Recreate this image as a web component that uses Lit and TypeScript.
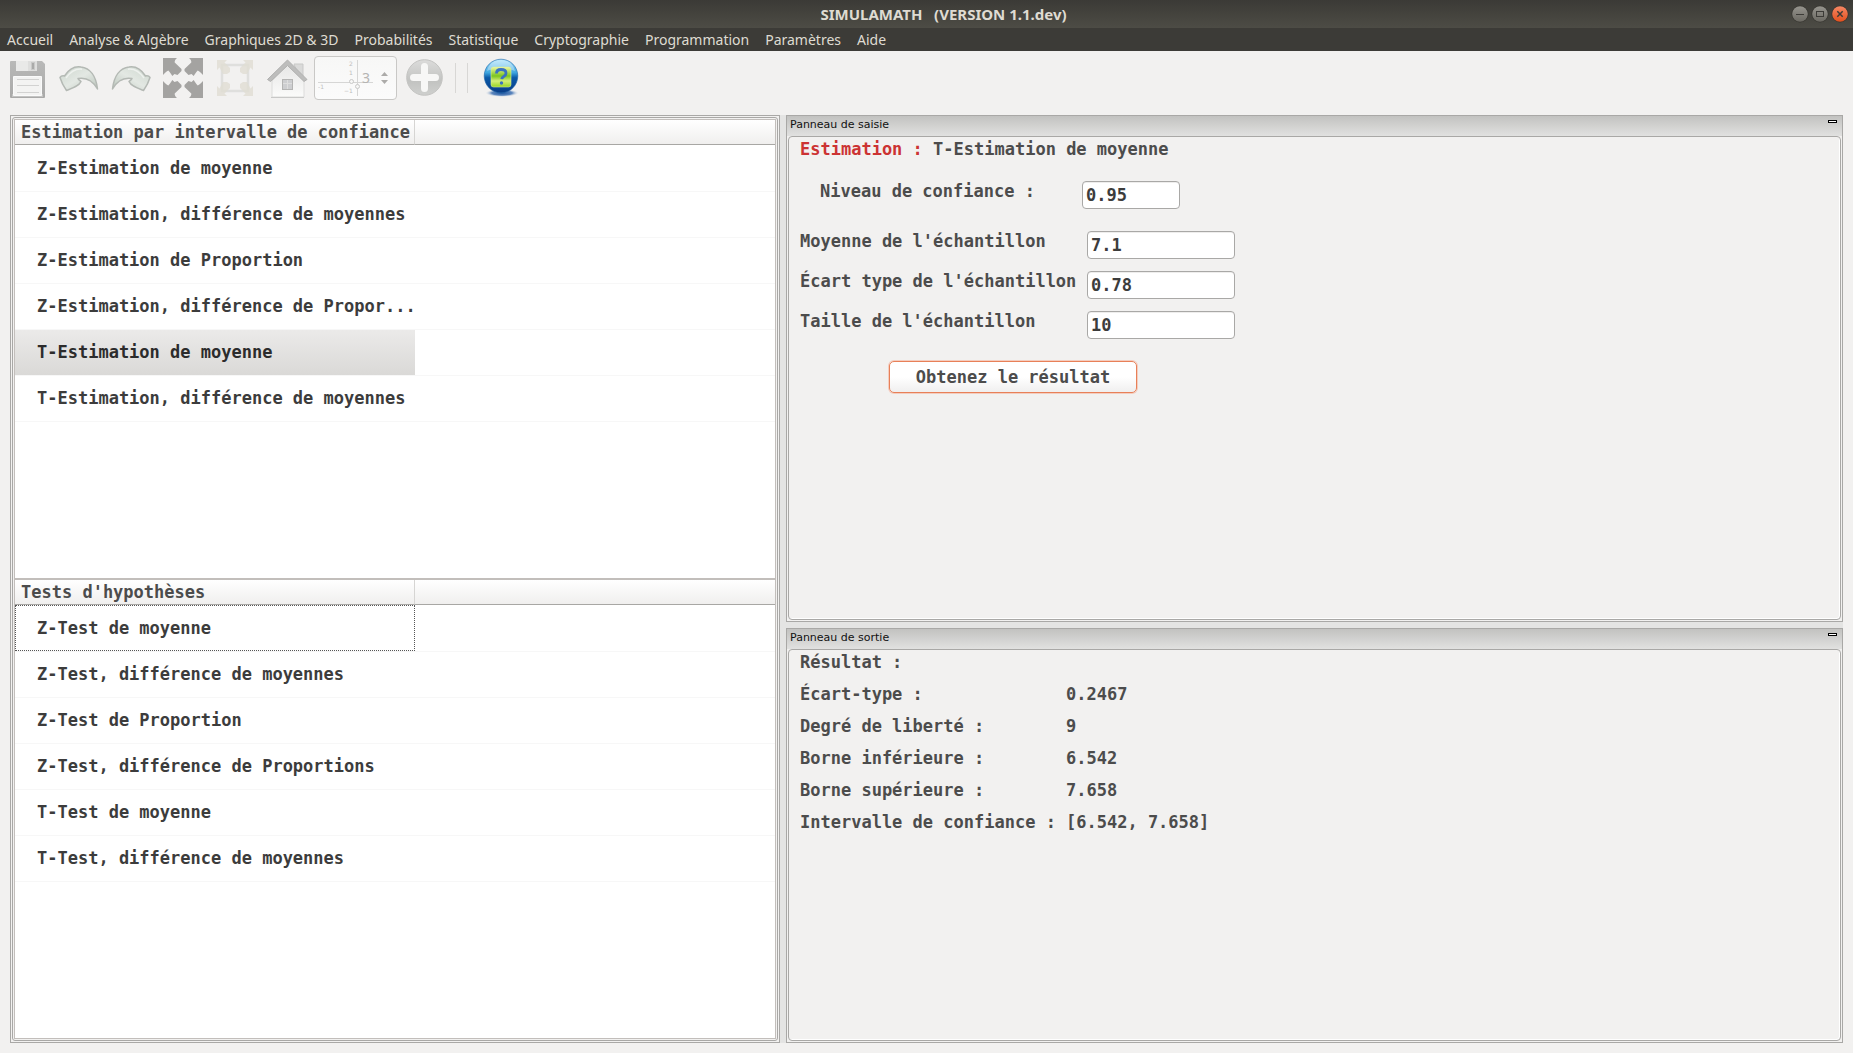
import { LitElement, html, css, svg } from "lit";
import { customElement, property, state } from "lit/decorators.js";
import { classMap } from "lit/directives/class-map.js";

const MENUS = [
  "Accueil",
  "Analyse & Algèbre",
  "Graphiques 2D & 3D",
  "Probabilités",
  "Statistique",
  "Cryptographie",
  "Programmation",
  "Paramètres",
  "Aide",
];

const ESTIMATIONS = [
  "Z-Estimation de moyenne",
  "Z-Estimation, différence de moyennes",
  "Z-Estimation de Proportion",
  "Z-Estimation, différence de Propor...",
  "T-Estimation de moyenne",
  "T-Estimation, différence de moyennes",
];

const TESTS = [
  "Z-Test de moyenne",
  "Z-Test, différence de moyennes",
  "Z-Test de Proportion",
  "Z-Test, différence de Proportions",
  "T-Test de moyenne",
  "T-Test, différence de moyennes",
];

const FIELDS = [
  { id: "mean", label: "Moyenne de l'échantillon", value: "7.1" },
  { id: "deviation", label: "Écart type de l'échantillon", value: "0.78" },
  { id: "size", label: "Taille de l'échantillon", value: "10" },
];

const RESULTS = [
  ["Écart-type :", "0.2467"],
  ["Degré de liberté :", "9"],
  ["Borne inférieure :", "6.542"],
  ["Borne supérieure :", "7.658"],
  ["Intervalle de confiance :", "[6.542, 7.658]"],
];

const reset = css`
  *,
  *::before,
  *::after {
    box-sizing: border-box;
  }
  button,
  input {
    margin: 0;
    padding: 0;
    border: 0;
    background: none;
    font: inherit;
    color: inherit;
    outline: none;
  }
`;

@customElement("title-bar")
class TitleBar extends LitElement {
  static styles = [
    reset,
    css`
      :host {
        display: grid;
        grid-template-columns: 1fr auto 1fr;
        align-items: center;
        height: 28px;
        padding-right: 4px;
        background: linear-gradient(#3b3a36, #4d4c45);
        color: #dfdbd2;
        font: bold 15px/28px "Noto Sans", sans-serif;
      }
      .title {
        grid-column: 2;
        margin: 0;
        padding-left: 38px;
        font: inherit;
        white-space: pre;
      }
      .buttons {
        display: flex;
        justify-content: flex-end;
        gap: 2px;
      }
      button {
        display: flex;
        width: 18px;
        height: 18px;
      }
    `,
  ];

  render() {
    return html`
      <h1 class="title">SIMULAMATH   (VERSION 1.1.dev)</h1>
      <div class="buttons">
        <button aria-label="Réduire">
          <svg width="18" height="18" viewBox="0 0 18 18">
            <defs>
              <linearGradient id="g" x2="0" y2="1">
                <stop offset="0" stop-color="#96948e" />
                <stop offset="1" stop-color="#6b6962" />
              </linearGradient>
            </defs>
            <circle cx="9" cy="9" r="8.5" fill="#35342f" />
            <circle cx="9" cy="9" r="7.8" fill="url(#g)" />
            <path d="M5 9.5h8" stroke="#3c3b37" />
          </svg>
        </button>
        <button aria-label="Agrandir">
          <svg width="18" height="18" viewBox="0 0 18 18">
            <circle cx="9" cy="9" r="8.5" fill="#35342f" />
            <circle cx="9" cy="9" r="7.8" fill="url(#g)" />
            <rect x="5.5" y="6.5" width="7" height="5" fill="none" stroke="#3c3b37" />
          </svg>
        </button>
        <button aria-label="Fermer">
          <svg width="18" height="18" viewBox="0 0 18 18">
            <defs>
              <linearGradient id="r" x2="0" y2="1">
                <stop offset="0" stop-color="#f58764" />
                <stop offset="1" stop-color="#e2501e" />
              </linearGradient>
            </defs>
            <circle cx="9" cy="9" r="8.5" fill="#35342f" />
            <circle cx="9" cy="9" r="7.8" fill="url(#r)" />
            <path d="M6.3 6.3l5.4 5.4M11.7 6.3l-5.4 5.4" stroke="#3c3b37" stroke-width="1.5" />
          </svg>
        </button>
      </div>
    `;
  }
}

@customElement("menu-bar")
class MenuBar extends LitElement {
  static styles = [
    reset,
    css`
      :host {
        display: block;
        background: #3c3b37;
        color: #dfdbd2;
        font: 14px/23px "Noto Sans", sans-serif;
      }
      nav {
        display: flex;
        gap: 16px;
        height: 23px;
        padding-left: 7px;
      }
      a {
        color: inherit;
        text-decoration: none;
        white-space: nowrap;
      }
    `,
  ];

  render() {
    return html`<nav>${MENUS.map((m) => html`<a href="#">${m}</a>`)}</nav>`;
  }
}

const saveIcon = svg`
  <defs>
    <linearGradient id="sv" x2="0" y2="1">
      <stop offset="0" stop-color="#b9b9b8" /><stop offset="1" stop-color="#a9a9a8" />
    </linearGradient>
  </defs>
  <g transform="translate(2 0)">
    <path d="M3 4h31l3 3v33a1 1 0 0 1-1 1H3a1 1 0 0 1-1-1V5a1 1 0 0 1 1-1z" fill="url(#sv)" />
    <path d="M4 37h31v3H4z" fill="#c3c3c2" />
    <path d="M8 4h21v10H8z" fill="#dededd" />
    <path d="M8 4h12v10H8z" fill="#e9e9e8" />
    <rect x="23.500" y="5.500" width="3" height="7" fill="#aaaaa9" stroke="#c9c9c8" />
    <path d="M5.500 19.500h28v19h-28z" fill="#f3f3f2" stroke="#fafafa" />
    <path d="M9 22.500h22M9 28.500h22M9 35.500h22" stroke="#d2d2d1" />
  </g>`;

const arrowShape = svg`
  <defs>
    <linearGradient id="ar" x2="1" y2="1">
      <stop offset="0" stop-color="#ccd6cd" /><stop offset=".5" stop-color="#e3e8e3" /><stop offset="1" stop-color="#b9c4ba" />
    </linearGradient>
  </defs>
  <path d="M2 19.500C3 18 4.500 17.500 6.500 18 11 11 17 8 23 9c9 1 15 9 16.500 22C35 23 29 19 20 20.500c.5 1.500 2 2 3 3C21 28 15 30 8.500 32.500 6 29 3.500 24.500 2 19.500z"
    fill="url(#ar)" stroke="#b4b9b4" stroke-width="1.500" stroke-linejoin="round" />
  <path d="M8 20C13 13 18 10.500 24 11.200" fill="none" stroke="#eef1ee" stroke-width="1.500" />`;

const undoIcon = svg`<g transform="translate(0 1)">${arrowShape}</g>`;
const redoIcon = svg`<g transform="matrix(-1 0 0 1 42 1)">${arrowShape}</g>`;

const cornerArrow = "M1 1h14c-1.500 1-2.500 3-2.300 4.500L19.500 12v2l-4 4-3-1-2.200 2c-1-1.500-2-3.500-4-5.500C4.500 14 3 16 1 18z";
const expandIcon = svg`
  <g fill="#a4a3a1">
    <path d=${cornerArrow} />
    <path d=${cornerArrow} transform="matrix(-1 0 0 1 42 0)" />
    <path d=${cornerArrow} transform="matrix(1 0 0 -1 0 42)" />
    <path d=${cornerArrow} transform="matrix(-1 0 0 -1 42 42)" />
  </g>`;

const fitCorner = "M3 3h10l-2.500 2.500L16 11v4l-3 2H9l-3.500-6.500L3 13z";
const fitIcon = svg`
  <rect x="8" y="8" width="26" height="26" fill="none" stroke="#dfdfdd" stroke-width="2.500" />
  <g fill="#e0ddd3" fill-opacity=".8">
    <path d=${fitCorner} />
    <path d=${fitCorner} transform="matrix(-1 0 0 1 42 0)" />
    <path d=${fitCorner} transform="matrix(1 0 0 -1 0 42)" />
    <path d=${fitCorner} transform="matrix(-1 0 0 -1 42 42)" />
  </g>`;

const homeIcon = svg`
  <defs>
    <linearGradient id="hw" x2="0" y2="1">
      <stop offset="0" stop-color="#e6e6e5" /><stop offset="1" stop-color="#fbfbfa" />
    </linearGradient>
  </defs>
  <path d="M28 7h9v16h-3z" fill="#dadad9" stroke="#c9c9c8" />
  <path d="M6 24L22 7l16 17v16H6z" fill="url(#hw)" stroke="#dcdcdb" />
  <path d="M5 40.500h33" stroke="#c8c8c7" />
  <path d="M1.500 22.500L21.500 3l19.500 19.500-3 2L21.500 8.500 4.500 24.500z" fill="#bdbdbc" stroke="#b1b1b0" stroke-linejoin="round" />
  <rect x="16.500" y="22.500" width="10" height="10" fill="#cdced0" stroke="#b4b4b3" />
  <path d="M21.500 23v9M17 26.500h9" stroke="#dedede" />`;

const plusIcon = svg`
  <defs>
    <linearGradient id="pl" x2="0" y2="1">
      <stop offset="0" stop-color="#dcdcdb" /><stop offset=".6" stop-color="#c2c3c1" /><stop offset="1" stop-color="#cfd0ce" />
    </linearGradient>
  </defs>
  <circle cx="21.500" cy="20.500" r="17.800" fill="url(#pl)" stroke="#c4c4c2" />
  <path d="M21.500 9.500v22M10.500 20.500h22" stroke="#f7f7f6" stroke-width="7" stroke-linecap="round" />`;

const helpIcon = svg`
  <defs>
    <linearGradient id="hb" x2="0" y2="1">
      <stop offset="0" stop-color="#a8e2fb" /><stop offset=".4" stop-color="#3da5df" />
      <stop offset=".55" stop-color="#0b5aa8" /><stop offset="1" stop-color="#0a3c86" />
    </linearGradient>
    <linearGradient id="hg" x2="0" y2="1">
      <stop offset="0" stop-color="#eef7a0" /><stop offset=".45" stop-color="#7cc51f" />
      <stop offset=".7" stop-color="#d5ee7a" /><stop offset="1" stop-color="#98d321" />
    </linearGradient>
    <radialGradient id="hs">
      <stop offset="0" stop-color="#1f56a0" /><stop offset=".6" stop-color="#5c86bd" /><stop offset="1" stop-color="#f2f1f0" stop-opacity="0" />
    </radialGradient>
  </defs>
  <ellipse cx="22" cy="36" rx="17" ry="4" fill="url(#hs)" />
  <circle cx="21" cy="19" r="16.800" fill="url(#hb)" stroke="#1c65a8" stroke-width=".6" />
  <path d="M7 14C9 6 15 3 21 3s12 3 14 11c-5-3-23-3-28 0z" fill="#fff" fill-opacity=".35" />
  <rect x="11" y="10" width="20" height="20" rx="2.500" fill="url(#hg)" stroke="#d9efa0" stroke-width=".6" />
  <path d="M16.500 16.500c0-3 2-4 4.500-4s5 1 5 3.700c0 3.300-4 3-4.300 6" fill="none" stroke="#3a72c0" stroke-width="2.800" />
  <circle cx="21.500" cy="26" r="1.700" fill="#3a72c0" />`;

@customElement("tool-bar")
class ToolBar extends LitElement {
  static styles = [
    reset,
    css`
      :host {
        display: flex;
        align-items: center;
        height: 54px;
        padding-left: 6px;
        gap: 6px;
      }
      .group {
        display: flex;
        gap: 10px;
      }
      .tool {
        display: flex;
        width: 42px;
        height: 42px;
      }
      .spin {
        display: flex;
        align-items: center;
        width: 83px;
        height: 44px;
        border: 1px solid #c9c8c6;
        border-radius: 4px;
        background: linear-gradient(#f7f7f6, #fbfbfb);
      }
      .spin svg {
        flex: none;
      }
      .level {
        display: flex;
        align-items: center;
        flex: 1;
        padding-left: 3px;
        color: #b5b4b2;
        font: 14px/20px "Noto Sans", sans-serif;
      }
      .level input {
        width: 12px;
        margin-left: -12px;
      }
      .arrows {
        display: flex;
        flex-direction: column;
        gap: 4px;
        padding-right: 8px;
      }
      .arrows button {
        display: flex;
      }
      .rules {
        display: flex;
        gap: 11px;
        margin: 0 6px 0 4px;
      }
      .rule {
        width: 1px;
        height: 30px;
        background: #d8d7d5;
      }
    `,
  ];

  private tool(label: string, icon: unknown) {
    return html`<button class="tool" aria-label=${label}>
      <svg width="42" height="42" viewBox="0 0 42 42">${icon}</svg>
    </button>`;
  }

  render() {
    return html`
      <div class="group">
        ${this.tool("Enregistrer", saveIcon)} ${this.tool("Annuler", undoIcon)}
        ${this.tool("Rétablir", redoIcon)} ${this.tool("Agrandir la vue", expandIcon)}
        ${this.tool("Ajuster la vue", fitIcon)} ${this.tool("Vue initiale", homeIcon)}
      </div>
      <div class="spin">
        <label class="level">
          <svg width="56" height="40" viewBox="0 0 56 40" aria-hidden="true">
            <path d="M0 24.500h55M39.500 2v36" stroke="#d6d6d5" />
            <g fill="#f7f7f6" stroke="#c9c9c8">
              <circle cx="33.500" cy="23.500" r="2" /><circle cx="39.500" cy="28.500" r="2" />
            </g>
            <g fill="#bebebd" font-family="DejaVu Sans" font-size="6">
              <text x="31" y="8">2</text><text x="31" y="17">1</text>
              <text x="0" y="31">-1</text><text x="26" y="35">−1</text>
            </g>
          </svg>
          <input type="text" inputmode="numeric" value="3" aria-label="Graduation" />
        </label>
        <div class="arrows">
          <button aria-label="Augmenter">
            <svg width="7" height="4" viewBox="0 0 7 4"><path d="M0 4l3.500-4L7 4z" fill="#acaba9" /></svg>
          </button>
          <button aria-label="Diminuer">
            <svg width="7" height="4" viewBox="0 0 7 4"><path d="M0 0l3.500 4L7 0z" fill="#acaba9" /></svg>
          </button>
        </div>
      </div>
      ${this.tool("Ajouter", plusIcon)}
      <div class="rules"><span class="rule"></span><span class="rule"></span></div>
      ${this.tool("Aide", helpIcon)}
    `;
  }
}

@customElement("method-table")
class MethodTable extends LitElement {
  @property() heading = "";
  @property({ attribute: false }) rows: string[] = [];
  @property({ type: Number }) selected = -1;
  @property({ type: Number }) current = -1;

  static styles = [
    reset,
    css`
      :host {
        display: block;
        flex: 1;
        min-height: 0;
        border: 1px solid #c2bebb;
        background: #fff;
        color: #3c3c3c;
        font: bold 17px/20px "DejaVu Sans Mono", monospace;
      }
      table {
        width: 100%;
        border-collapse: separate;
        border-spacing: 0;
        table-layout: fixed;
      }
      .name {
        width: 400px;
      }
      th {
        height: 25px;
        padding: 0 0 0 6px;
        border-bottom: 1px solid #a8a7a4;
        background: linear-gradient(#fff, #f0efee);
        color: #4c4c4c;
        text-align: left;
        white-space: nowrap;
      }
      th.name {
        border-right: 1px solid #d6d5d3;
      }
      td {
        height: 46px;
        padding: 0 0 1px 22px;
        border: 0 solid #f7f7f7;
        border-top-width: 1px;
        white-space: nowrap;
      }
      tr:first-child td {
        border-top-color: transparent;
      }
      tr:last-child td {
        height: 47px;
        border-bottom-width: 1px;
      }
      .selected .name {
        background: linear-gradient(#ebeae9, #dad9d7) padding-box;
        color: #2c2c2c;
      }
      .current .name {
        padding: 0 0 0 21px;
        border: 1px dotted #555;
      }
      tr.current:first-child .name {
        border-top-color: #555;
      }
    `,
  ];

  render() {
    return html`<table>
      <thead>
        <tr>
          <th class="name" scope="col">${this.heading}</th>
          <th></th>
        </tr>
      </thead>
      <tbody>
        ${this.rows.map(
          (row, i) => html`<tr
            class=${classMap({ selected: i === this.selected, current: i === this.current })}
            @click=${() => (this.selected = i)}
          >
            <td class="name">${row}</td>
            <td></td>
          </tr>`
        )}
      </tbody>
    </table>`;
  }
}

@customElement("dock-panel")
class DockPanel extends LitElement {
  @property() heading = "";

  static styles = [
    reset,
    css`
      :host {
        display: flex;
        flex-direction: column;
        min-height: 0;
        border: 1px solid #a9a8a6;
        background: #f2f1f0;
      }
      header {
        display: flex;
        justify-content: space-between;
        height: 20px;
        padding: 0 5px 0 3px;
        background: linear-gradient(#c2c2c0, #e1e1e0);
        color: #111;
      }
      h2 {
        margin: 0;
        font: 11px/17px "DejaVu Sans", sans-serif;
      }
      button {
        width: 9px;
        height: 3px;
        margin-top: 4px;
        border: 1px solid #000;
        background: #fff;
      }
      .body {
        flex: 1;
        margin: 0 1px 1px;
        padding: 2px 11px;
        border: 1px solid #a9a8a6;
        border-radius: 4px;
        box-shadow: inset -1px -1px #fff;
      }
    `,
  ];

  render() {
    return html`
      <header>
        <h2>${this.heading}</h2>
        <button aria-label="Réduire le panneau"></button>
      </header>
      <div class="body"><slot></slot></div>
    `;
  }
}

@customElement("app-root")
class AppRoot extends LitElement {
  @state() private method = "T-Estimation de moyenne";

  static styles = [
    reset,
    css`
      :host {
        display: flex;
        flex-direction: column;
        min-height: 100vh;
        background: #f2f1f0;
        color: #4c4c4c;
        font: bold 17px/20px "DejaVu Sans Mono", monospace;
      }
      main {
        display: flex;
        flex: 1;
        gap: 6px;
        margin: 10px;
        background: #e4e4e3;
      }
      .methods {
        display: flex;
        flex: 766 1 0;
        min-width: 0;
        padding: 1px;
        border: 1px solid #a9a8a6;
        background: #f2f1f0;
      }
      .tables {
        display: flex;
        flex: 1;
        flex-direction: column;
        min-width: 0;
        padding: 1px;
        border: 1px solid #a9a8a6;
        border-radius: 3px;
      }
      .panels {
        display: flex;
        flex: 1057 1 0;
        flex-direction: column;
        gap: 6px;
        min-width: 0;
      }
      .entry {
        flex: 507 1 0;
      }
      .output {
        flex: 415 1 0;
      }
      .subject {
        margin: 0;
        font: inherit;
      }
      .kind {
        color: #cc3333;
      }
      form {
        display: flex;
        flex-direction: column;
        align-items: flex-start;
      }
      .confidence {
        display: grid;
        grid-template-columns: 262px 98px;
        margin: 22px 0 22px 20px;
      }
      .fields {
        display: grid;
        grid-template-columns: 287px 148px;
        row-gap: 12px;
      }
      label {
        white-space: nowrap;
      }
      input {
        width: 100%;
        height: 28px;
        padding: 0 3px;
        border: 1px solid #a9a8a6;
        border-radius: 4px;
        background: #fff;
        box-shadow: inset 0 1px #eeedec;
        color: #3c3c3c;
      }
      .submit {
        width: 248px;
        height: 32px;
        margin: 22px 0 0 89px;
        border: 1px solid #e88058;
        border-radius: 5px;
        background: linear-gradient(#fff 50%, #f0efef);
        box-shadow: 0 0 0 1px #f4cdbf;
      }
      dl {
        display: grid;
        grid-template-columns: 266px auto;
        row-gap: 12px;
        margin: 12px 0 0;
      }
      dt,
      dd {
        margin: 0;
        white-space: nowrap;
      }
    `,
  ];

  render() {
    return html`
      <title-bar></title-bar>
      <menu-bar></menu-bar>
      <tool-bar></tool-bar>
      <main>
        <section class="methods">
          <div class="tables">
            <method-table
              heading="Estimation par intervalle de confiance"
              .rows=${ESTIMATIONS}
              .selected=${4}
            ></method-table>
            <method-table heading="Tests d'hypothèses" .rows=${TESTS} .current=${0}></method-table>
          </div>
        </section>
        <div class="panels">
          <dock-panel class="entry" heading="Panneau de saisie">
            <form @submit=${(e: Event) => e.preventDefault()}>
              <h3 class="subject"><span class="kind">Estimation :</span> ${this.method}</h3>
              <div class="confidence">
                <label for="confidence">Niveau de confiance :</label>
                <input id="confidence" type="text" value="0.95" />
              </div>
              <div class="fields">
                ${FIELDS.map(
                  (f) => html`<label for=${f.id}>${f.label}</label>
                    <input id=${f.id} type="text" value=${f.value} />`
                )}
              </div>
              <button class="submit">Obtenez le résultat</button>
            </form>
          </dock-panel>
          <dock-panel class="output" heading="Panneau de sortie">
            <h3 class="subject">Résultat :</h3>
            <dl>${RESULTS.map(([name, value]) => html`<dt>${name}</dt><dd>${value}</dd>`)}</dl>
          </dock-panel>
        </div>
      </main>
    `;
  }
}
